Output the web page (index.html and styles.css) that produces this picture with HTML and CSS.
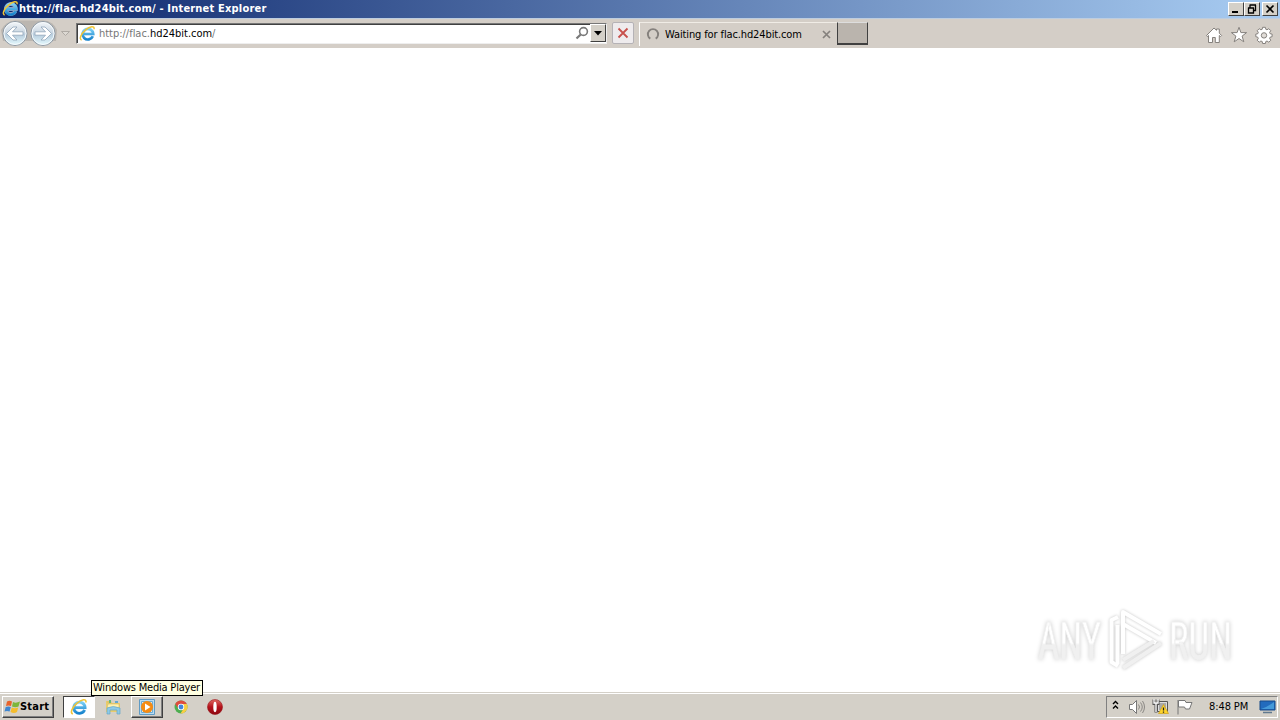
FILE: index.html
```html
<!DOCTYPE html>
<html lang="en">
<head>
    <meta charset="UTF-8">
    <title>http://flac.hd24bit.com/ - Internet Explorer</title>
    <link rel="stylesheet" href="styles.css">
</head>
<body>
    <!-- shared icons -->
    <svg class="defs" width="0" height="0">
        <defs>
            <linearGradient id="ieBlue" x1="0" y1="0" x2="0" y2="1">
                <stop offset="0" stop-color="#7cd0f5"/>
                <stop offset="1" stop-color="#1683cd"/>
            </linearGradient>
            <linearGradient id="orb" x1="0" y1="0" x2="0" y2="1">
                <stop offset="0" stop-color="#f4f7fa"/>
                <stop offset=".45" stop-color="#ccd8e3"/>
                <stop offset=".55" stop-color="#b9cede"/>
                <stop offset="1" stop-color="#e6fbff"/>
            </linearGradient>
            <linearGradient id="red" x1="0" y1="0" x2="0" y2="1">
                <stop offset="0" stop-color="#e06a62"/>
                <stop offset=".5" stop-color="#b5121b"/>
                <stop offset="1" stop-color="#8c0810"/>
            </linearGradient>
            <linearGradient id="markFill" x1="0" y1="0" x2="0" y2="1">
                <stop offset=".52" stop-color="#fff"/>
                <stop offset=".56" stop-color="#f0f0f0"/>
            </linearGradient>
            <symbol id="ie" viewBox="0 0 16 16">
                <path d="M12.600 10.400A4.700 4.700 0 1 1 13 8.500H4.500" fill="none" stroke="#e8f4fb" stroke-width="3.600" opacity=".6"/>
                <path d="M13 10.600A5 5 0 1 1 13.400 8.500H4.500" fill="none" stroke="url(#ieBlue)" stroke-width="2.500"/>
                <path d="M2.5 14.200C-.2 13.300 1.800 8.500 6 4.800 10.300 1.200 14.800.2 14.200 4" fill="none" stroke="#f0c436" stroke-width="1.400"/>
            </symbol>
        </defs>
    </svg>

    <div class="title-bar">
        <svg class="title-icon" width="17" height="17"><use href="#ie"/></svg>
        <span class="title-text">http://flac.hd24bit.com/ - Internet Explorer</span>
        <div class="window-buttons">
            <svg class="win-btn" viewBox="0 0 14 12"><path d="M3 9h6" stroke="#000" stroke-width="2"/></svg>
            <svg class="win-btn" viewBox="0 0 14 12"><path d="M5 2h6M5 1.500v3M10.500 2v5.500H8.500M3 5h6M3.500 4.500v5.500h5V5" fill="none" stroke="#000" stroke-width="1.300"/></svg>
            <svg class="win-btn close" viewBox="0 0 14 12"><path d="M3.500 2.500l7 7M10.500 2.500l-7 7" stroke="#000" stroke-width="1.700"/></svg>
        </div>
    </div>

    <div class="toolbar">
        <svg class="nav" width="74" height="30" viewBox="0 0 74 30">
            <path d="M15 1.500H44Q53 2 57 11L56 22H3L1 11Q6 2 15 1.500Z" fill="#bbb6b0"/>
            <circle cx="15" cy="14.500" r="12" fill="url(#orb)" stroke="#8d98a3"/>
            <circle cx="43" cy="14.500" r="12" fill="url(#orb)" stroke="#8d98a3"/>
            <circle cx="15" cy="14.500" r="11" fill="none" stroke="#f6fafc"/>
            <circle cx="43" cy="14.500" r="11" fill="none" stroke="#f6fafc"/>
            <path d="M6.500 14.500L13 8H17L12.500 12.800H23V16.200H12.500L17 21H13Z" fill="#fff" stroke="#8fa5b9" stroke-width=".8"/>
            <path d="M51.500 14.500L45 8H41L45.500 12.800H35V16.200H45.500L41 21H45Z" fill="#fff" stroke="#8fa5b9" stroke-width=".8"/>
            <path d="M61.500 12.500h8l-4 4z" fill="#ddd9d3" stroke="#aaa59f" stroke-width=".9"/>
        </svg>
        <div class="address">
            <svg width="17" height="17"><use href="#ie"/></svg>
            <span class="url">http://flac.<b>hd24bit.com</b>/</span>
            <svg width="15" height="16" viewBox="0 0 15 16"><circle cx="8.500" cy="6.500" r="3.900" fill="none" stroke="#797979" stroke-width="1.600"/><path d="M5.700 9.500L1.500 13.500" stroke="#797979" stroke-width="2.200"/></svg>
            <span class="drop"><svg width="8" height="5"><path d="M0 0h8L4 4.500z"/></svg></span>
        </div>
        <span class="stop"><svg width="12" height="12" viewBox="0 0 12 12"><path d="M1.500 1.500l9 9M10.500 1.500l-9 9" stroke="#c8504c" stroke-width="1.800"/></svg></span>
        <div class="tab">
            <svg width="14" height="14" viewBox="0 0 14 14"><path d="M4.300 11.600A5.100 5.100 0 1 1 9.700 11.600" fill="none" stroke="#85817d" stroke-width="1.900"/></svg>
            <span class="tab-text">Waiting for flac.hd24bit.com</span>
            <svg width="9" height="9" viewBox="0 0 9 9"><path d="M1 1l7 7M8 1L1 8" stroke="#85817d" stroke-width="1.700"/></svg>
        </div>
        <div class="new-tab"></div>
        <div class="tools">
            <svg width="18" height="18" viewBox="0 0 18 18"><path d="M1.500 9.500L9 2l2.500 2.300V3h2.800v4.200l2.300 2.300-1 1-1.300-1V16.500h-4v-5H7.500v5h-4V9.500l-1.200 1z" fill="#fff" stroke="#85817d"/></svg>
            <svg width="18" height="18" viewBox="0 0 18 18"><path d="M9 1.300l1.900 5.300h5.700l-4.500 3.500 1.700 5.700L9 12.500l-4.800 3.300 1.700-5.700-4.500-3.500h5.700z" fill="#fff" stroke="#85817d"/></svg>
            <svg width="18" height="18" viewBox="0 0 18 18">
                <path d="M7.600 1.300h2.800l.4 2 1.200.5 1.800-1.100 2 2-1.200 1.700.5 1.300 2 .4v2.600l-2 .5-.5 1.200 1.200 1.800-2 2-1.800-1.200-1.200.5-.4 2H7.600l-.4-2-1.300-.5-1.700 1.200-2-2 1.100-1.800-.5-1.200-2-.5V8.100l2-.4.5-1.300-1.100-1.700 2-2 1.700 1.100 1.300-.5z" fill="#fff" stroke="#85817d"/>
                <circle cx="9" cy="9.400" r="2.700" fill="#e0dcd7" stroke="#85817d"/>
            </svg>
        </div>
    </div>

    <div class="page">
        <svg class="watermark" width="230" height="80" viewBox="0 0 230 80">
            <g class="mark">
                <text x="18" y="59" textLength="63" lengthAdjust="spacingAndGlyphs">ANY</text>
                <text x="149" y="59" textLength="63" lengthAdjust="spacingAndGlyphs">RUN</text>
            </g>
            <g class="mark-lines">
                <path d="M98 17L91.500 20V62L98 66"/>
                <path d="M97.500 64V25"/>
                <path d="M103 54V12L141 34"/>
                <path d="M103 24L136 43"/>
                <path d="M141 43L103 68" class="low"/>
                <path d="M134 41L103 60" class="low"/>
            </g>
        </svg>
    </div>

    <div class="taskbar">
        <div class="start">
            <svg width="17" height="16" viewBox="0 0 17 16">
                <path d="M3 2.500Q5.500 1 8 2.500L7 7Q4.500 5.800 2 7z" fill="#e8632b"/>
                <path d="M9 3Q12 4.500 16 2.500L14.500 7.500Q11.500 9 8 7.500z" fill="#7cb63c"/>
                <path d="M1.700 8Q4.500 6.800 6.800 8L5.600 12.500Q3 11.500.5 12.500z" fill="#3f86d0"/>
                <path d="M7.800 8.500Q11 10 14.200 8.500L13 13Q10 15 6.500 13z" fill="#f5bd2d"/>
            </svg>
            <span>Start</span>
        </div>
        <div class="task active"><svg width="18" height="18"><use href="#ie"/></svg></div>
        <div class="task">
            <svg width="18" height="18" viewBox="0 0 18 18">
                <path d="M2 3h5l1 2h8v9H2z" fill="#e9cc6c"/><path d="M3 4h3M4 6h11v4H3z" fill="#fff1ae" stroke="#c9b35f" stroke-width=".5"/>
                <path d="M5 2h2v3H5z" fill="#64b77a"/><path d="M11 3h3v2h-3z" fill="#63a8d2"/>
                <path d="M3 10Q9 7 16 10v6h-3v-4H6v4H3z" fill="#8dcae7" stroke="#66a6c7" stroke-width=".7"/>
            </svg>
        </div>
        <div class="task raised">
            <svg width="18" height="18" viewBox="0 0 18 18"><path d="M1.500 1.500h15v15h-15z" fill="#b8dcf3" stroke="#609bc4"/><path d="M3.500 3.500h11v11h-11z" fill="#e6f2f8" stroke="#6baad2"/><circle cx="9" cy="9" r="6" fill="#f58b13"/><path d="M7 5.500v7L12.500 9z" fill="#fff"/></svg>
        </div>
        <div class="task">
            <svg width="14" height="14" viewBox="0 0 14 14"><circle cx="7" cy="7" r="6.500" fill="#4dae50"/><path d="M1.200 4A6.500 6.500 0 0 1 12.800 4H7L4.300 8.500z" fill="#df4c3e"/><path d="M7 4h5.800A6.500 6.500 0 0 1 6.500 13.500L9.600 8.500z" fill="#f8ce43"/><circle cx="7" cy="7" r="3.200" fill="#fff"/><circle cx="7" cy="7" r="2.400" fill="#4285db"/></svg>
        </div>
        <div class="task">
            <svg width="16" height="16" viewBox="0 0 16 16"><circle cx="8" cy="8" r="7.500" fill="url(#red)" stroke="#981118" stroke-width=".6"/><ellipse cx="8" cy="8" rx="1.700" ry="5.200" fill="#fff"/></svg>
        </div>
        <div class="tray">
            <svg class="chevrons" width="7" height="10" viewBox="0 0 7 10"><path d="M1 4l2.500-2.500L6 4M1 8.500L3.500 6 6 8.500" fill="none" stroke="#000" stroke-width="1.400"/></svg>
            <svg width="18" height="16" viewBox="0 0 18 16"><path d="M1.500 5.500h3l4-4v13l-4-4h-3z" fill="#fff" stroke="#777"/><path d="M10.500 5.500q2 2.500 0 5M12.500 3.500q3.500 4.500 0 9M14.500 2q4 6 0 12" fill="none" stroke="#8b8884"/></svg>
            <svg width="18" height="17" viewBox="0 0 18 17">
                <path d="M5.500 3.500h10v10h-10z" fill="#ddd" stroke="#555"/><path d="M7 5h7v7H7z" fill="#a9a9a9"/>
                <path d="M2 1.500v4h4v-4M4 5.500v9" fill="none" stroke="#555" stroke-width="3"/><path d="M2 1v4h4V1M4 5v9" fill="none" stroke="#fff" stroke-width="1.300"/>
                <path d="M11.500 6.500l5 9h-10z" fill="#ffd52b" stroke="#cfa018" stroke-width=".7"/><path d="M11.500 9.500v3M11.500 13.500v1.200" stroke="#222" stroke-width="1.300"/>
            </svg>
            <svg width="18" height="16" viewBox="0 0 18 16"><path d="M2 1v14.500" stroke="#777"/><path d="M2.500 1.500h6.500l1 2h6l-2.500 6.500h-4l-1-2h-6z" fill="#fff" stroke="#777"/></svg>
            <span class="clock">8:48 PM</span>
            <svg class="desktop" width="17" height="14" viewBox="0 0 17 14"><path d="M1 1h15v9H1z" fill="#226bbd" stroke="#164a89"/><path d="M2 9Q8 7 15 2v7z" fill="#459ad9"/><path d="M4 12.500h9" stroke="#61798f" stroke-width="1.500"/></svg>
        </div>
        <div class="tooltip">Windows Media Player</div>
    </div>
</body>
</html>
```
FILE: styles.css
```css
* {
    box-sizing: border-box;
}
body {
    margin: 0;
    width: 1280px;
    height: 720px;
    overflow: hidden;
    display: flex;
    flex-direction: column;
    background: #fff;
    color: #000;
    font-family: "DejaVu Sans Condensed", "DejaVu Sans", sans-serif;
    font-size: 11px;
    font-stretch: condensed;
    white-space: nowrap;
}
svg {
    display: block;
    flex: none;
}
.defs {
    position: absolute;
}
.title-bar {
    height: 18px;
    flex: none;
    display: flex;
    align-items: center;
    padding: 0 2px 1px;
    background: linear-gradient(90deg, #0a246a, #a6caf0 98%);
    color: #fff;
}
.title-text {
    width: 250px;
    font-weight: bold;
    letter-spacing: 0.19px;
}
.window-buttons {
    display: flex;
    margin: 1px 0 0 auto;
}
.win-btn {
    width: 16px;
    height: 14px;
    background: #d4d0c8;
    border: 1px solid;
    border-color: #fff #404040 #404040 #fff;
}
.close {
    margin-left: 2px;
}
.toolbar {
    height: 30px;
    flex: none;
    display: flex;
    align-items: center;
    background: #d4cec7;
    border-top: 1px solid #bdcde0;
}
.nav {
    margin-right: 2px;
}
.address {
    width: 531px;
    height: 21px;
    margin-top: -1px;
    display: flex;
    align-items: center;
    padding-left: 2px;
    background: #fff;
    border: 1px solid;
    border-color: #777 #eee #eee #777;
    box-shadow: inset 1px 1px #404040;
}
.url {
    margin-left: 3px;
    flex: 1;
    color: #777;
    letter-spacing: -0.02px;
}
.url b {
    color: #000;
    font-weight: normal;
}
.drop {
    width: 16px;
    height: 18px;
    display: flex;
    align-items: center;
    justify-content: center;
    background: #d4d0c8;
    border: 1px solid;
    border-color: #fff #404040 #404040 #fff;
}
.stop {
    width: 22px;
    height: 22px;
    margin: -1px 0 0 5px;
    display: flex;
    align-items: center;
    justify-content: center;
    background: #eeebed;
    border: 1px solid #b5b2b6;
    border-radius: 2px;
}
.tab {
    width: 198px;
    height: 24px;
    margin: 0 0 0 5px;
    padding: 0 6px;
    display: flex;
    align-items: center;
    border-top: 1px solid #f0ece6;
    border-left: 1px solid #fff;
}
.tab-text {
    flex: 1;
    margin-left: 5px;
    letter-spacing: -0.12px;
}
.new-tab {
    width: 31px;
    height: 23px;
    margin-top: -1px;
    background: #bab4ad;
    border: 1px solid #404040;
    border-top-color: #ddd;
    border-bottom-width: 2px;
}
.tools {
    display: flex;
    gap: 7px;
    margin: 2px 7px 0 auto;
}
.page {
    flex: 1;
    display: flex;
    align-items: flex-end;
    justify-content: flex-end;
    padding: 0 30px 12px 0;
}
.watermark {
    overflow: visible;
}
.watermark text {
    font-family: Roboto, sans-serif;
    font-size: 51px;
}
.mark {
    fill: url(#markFill);
    stroke: #f0f0f0;
    stroke-width: 0.8;
    filter: drop-shadow(0 0 2px #ccc);
}
.mark-lines {
    fill: none;
    stroke: #fff;
    stroke-width: 4;
    stroke-linejoin: round;
    filter: drop-shadow(0 0 1.5px #c4c4c4);
}
.mark-lines .low {
    stroke: #f0f0f0;
}
.taskbar {
    position: relative;
    height: 28px;
    flex: none;
    display: flex;
    align-items: center;
    padding: 2px 2px 2px;
    background: #d4d0c8;
    border-top: 1px solid #d4d0c8;
    box-shadow: inset 0 1px #fff;
}
.start {
    width: 52px;
    height: 22px;
    margin-right: 9px;
    display: flex;
    align-items: center;
    padding-left: 1px;
    font-weight: bold;
    letter-spacing: 0.2px;
    border: 1px solid;
    border-color: #fff #404040 #404040 #fff;
    box-shadow: inset -1px -1px #808080;
}
.start span {
    margin-left: -1px;
}
.task {
    width: 32px;
    height: 22px;
    margin-right: 2px;
    display: flex;
    align-items: center;
    justify-content: center;
}
.active {
    background: #fff;
    border: 1px solid;
    border-color: #404040 #fff #fff #404040;
}
.raised {
    border: 1px solid;
    border-color: #fff #404040 #404040 #fff;
    box-shadow: inset -1px -1px #808080;
}
.tray {
    width: 172px;
    height: 22px;
    margin-left: auto;
    display: flex;
    align-items: center;
    gap: 6px;
    padding-left: 5px;
    border: 1px solid;
    border-color: #808080 #fff #fff #808080;
}
.chevrons {
    margin: -3px 3px 0 0;
}
.clock {
    width: 40px;
    margin-left: 9px;
    letter-spacing: -0.1px;
}
.desktop {
    margin-left: 4px;
}
.tooltip {
    position: absolute;
    left: 91px;
    top: -13px;
    width: 112px;
    height: 16px;
    padding-left: 1px;
    line-height: 14px;
    letter-spacing: -0.2px;
    background: #ffffe1;
    border: 1px solid #000;
}
```
